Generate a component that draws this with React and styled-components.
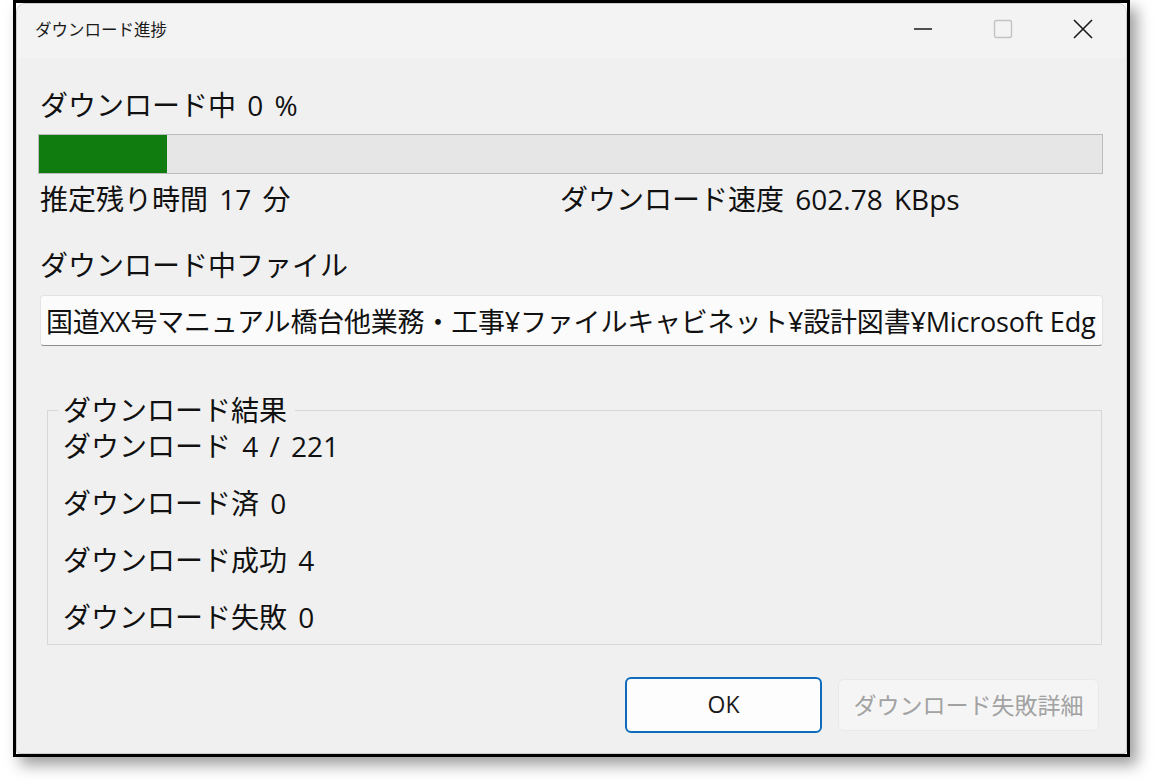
import React from 'react';
import styled, { createGlobalStyle } from 'styled-components';

const FONT = `"Open Sans", "Noto Sans CJK JP", sans-serif`;

const GlobalStyle = createGlobalStyle`
  html, body {
    margin: 0;
    padding: 0;
    background: #ffffff;
  }
  body {
    font-family: ${FONT};
    color: #1a1a1a;
    min-height: 781px;
  }
  * {
    box-sizing: border-box;
  }
`;

const Frame = styled.div`
  width: 1117px;
  height: 757px;
  margin-left: 13px;
  border: 3px solid #000;
  background: #ffffff;
  box-shadow: 7px 8px 14px rgba(0, 0, 0, 0.38);
`;

const Window = styled.div`
  width: 100%;
  height: 100%;
  border: 1px solid #cdcdcd;
  border-radius: 9px 9px 4px 4px;
  background: #f0f0f0;
  overflow: hidden;
  display: flex;
  flex-direction: column;
`;

const TitleBar = styled.div`
  height: 54px;
  flex: none;
  display: flex;
  align-items: center;
  justify-content: space-between;
  background: #f3f3f3;
  padding-left: 18px;
`;

const Title = styled.span`
  font-size: 16.5px;
  color: #1a1a1a;
  padding-bottom: 4px;
`;

const Controls = styled.div`
  display: flex;
  height: 100%;
  margin-right: 3px;
`;

const CaptionButton = styled.div`
  width: 80px;
  height: 100%;
  display: flex;
  align-items: center;
  justify-content: center;
  padding-bottom: 4px;
`;

const Body = styled.div`
  flex: 1;
  display: flex;
  flex-direction: column;
  padding: 29px 23px 0 21px;
`;

const Label = styled.div`
  font-size: 28px;
  line-height: 36px;
  height: 36px;
  white-space: nowrap;
  word-spacing: 4px;
  color: #111;
  margin-top: ${(p) => p.$top || 0}px;
  padding-left: ${(p) => p.$indent || 0}px;
`;

const Track = styled.div`
  margin-top: 11px;
  height: 40px;
  background: #e6e6e6;
  border: 1px solid #bcbcbc;
  display: flex;
`;

const Fill = styled.div`
  height: 100%;
  background: #107c10;
`;

const StatusRow = styled.div`
  display: grid;
  grid-template-columns: 520px 1fr;
  margin-top: 7px;
  padding-left: 2px;
`;

const PathBox = styled.div`
  margin-top: 12px;
  margin-left: 2px;
  height: 51px;
  background: #fbfbfb;
  border: 1px solid #e3e3e3;
  border-bottom: 1px solid #8c8c8c;
  border-radius: 4px;
  display: flex;
  align-items: center;
  padding-left: 5px;
  overflow: hidden;
  white-space: nowrap;
  font-size: 27px;
  letter-spacing: -0.2px;
  color: #111;
`;

const Group = styled.fieldset`
  margin: 46px 1px 0 9px;
  padding: 0 0 9px 10px;
  border: 1px solid #d7d7d7;
  min-width: 0;
`;

const Legend = styled.legend`
  font-size: 28px;
  line-height: 36px;
  padding: 0 8px 0 5px;
  color: #111;
`;

const ResultList = styled.div`
  display: flex;
  flex-direction: column;
  gap: 21px;
  padding-left: 5px;
`;

const Footer = styled.div`
  display: flex;
  justify-content: flex-end;
  align-items: center;
  gap: 16px;
  margin-top: 32px;
  margin-right: 4px;
`;

const Button = styled.button`
  font-family: ${FONT};
  font-size: 23px;
  border-radius: 6px;
  display: flex;
  align-items: center;
  justify-content: center;
  width: ${(p) => p.$width}px;
  height: ${(p) => (p.$primary ? 56 : 52)}px;
  background: ${(p) => (p.$primary ? '#fdfdfd' : '#f5f5f5')};
  border: ${(p) => (p.$primary ? '2px solid #0f6cbd' : '1px solid #e9e9e9')};
  color: ${(p) => (p.$primary ? '#1a1a1a' : '#a2a2a2')};
  padding: 0;
  padding-bottom: 2px;
`;

const Minimize = () => (
  <svg width="20" height="4" viewBox="0 0 20 4">
    <line x1="1" y1="2" x2="19" y2="2" stroke="#1a1a1a" strokeWidth="1.6" />
  </svg>
);

const Maximize = () => (
  <svg width="20" height="20" viewBox="0 0 20 20">
    <rect x="1.5" y="1.5" width="17" height="17" rx="2" fill="none" stroke="#c2c2c2" strokeWidth="1.4" />
  </svg>
);

const Close = () => (
  <svg width="20" height="20" viewBox="0 0 20 20">
    <path d="M1 1 L19 19 M19 1 L1 19" stroke="#1a1a1a" strokeWidth="1.6" />
  </svg>
);

const results = [
  'ダウンロード 4 / 221',
  'ダウンロード済 0',
  'ダウンロード成功 4',
  'ダウンロード失敗 0',
];

export default function App() {
  const progress = 12;
  return (
    <>
      <GlobalStyle />
      <Frame>
        <Window>
          <TitleBar>
            <Title>ダウンロード進捗</Title>
            <Controls>
              <CaptionButton>
                <Minimize />
              </CaptionButton>
              <CaptionButton>
                <Maximize />
              </CaptionButton>
              <CaptionButton>
                <Close />
              </CaptionButton>
            </Controls>
          </TitleBar>
          <Body>
            <Label $indent={2}>ダウンロード中 0 %</Label>
            <Track>
              <Fill style={{ width: `${progress}%` }} />
            </Track>
            <StatusRow>
              <Label>推定残り時間 17 分</Label>
              <Label>ダウンロード速度 602.78 KBps</Label>
            </StatusRow>
            <Label $top={30} $indent={2}>
              ダウンロード中ファイル
            </Label>
            <PathBox>
              国道XX号マニュアル橋台他業務・工事¥ファイルキャビネット¥設計図書¥Microsoft Edg
            </PathBox>
            <Group>
              <Legend>ダウンロード結果</Legend>
              <ResultList>
                {results.map((r) => (
                  <Label key={r}>{r}</Label>
                ))}
              </ResultList>
            </Group>
            <Footer>
              <Button $primary $width={197}>
                OK
              </Button>
              <Button $width={261} disabled>
                ダウンロード失敗詳細
              </Button>
            </Footer>
          </Body>
        </Window>
      </Frame>
    </>
  );
}
